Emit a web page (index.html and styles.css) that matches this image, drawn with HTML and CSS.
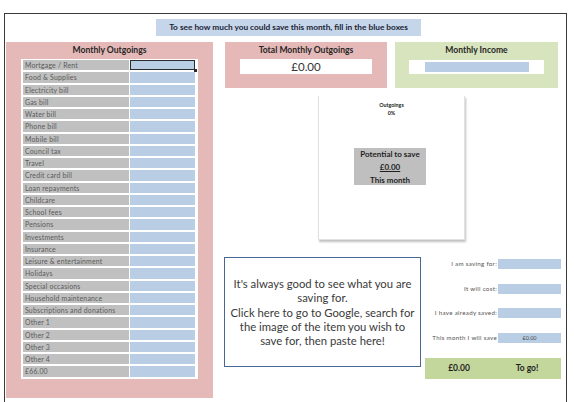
FILE: index.html
```html
<!DOCTYPE html>
<html lang="en">

<head>
    <meta charset="UTF-8">
    <title>Savings Planner</title>
    <link rel="stylesheet" href="styles.css">
</head>

<body>
    <div class="sheet">
        <div class="banner">To see how much you could save this month, fill in the blue boxes</div>

        <div class="layout">
            <section class="outgoings">
                <h2 class="panel-title">Monthly Outgoings</h2>
                <div class="bills">
                    <div class="bill"><span class="bill-name">Mortgage / Rent</span><span class="bill-input selected"></span></div>
                    <div class="bill"><span class="bill-name">Food &amp; Supplies</span><span class="bill-input"></span></div>
                    <div class="bill"><span class="bill-name">Electricity bill</span><span class="bill-input"></span></div>
                    <div class="bill"><span class="bill-name">Gas bill</span><span class="bill-input"></span></div>
                    <div class="bill"><span class="bill-name">Water bill</span><span class="bill-input"></span></div>
                    <div class="bill"><span class="bill-name">Phone bill</span><span class="bill-input"></span></div>
                    <div class="bill"><span class="bill-name">Mobile bill</span><span class="bill-input"></span></div>
                    <div class="bill"><span class="bill-name">Council tax</span><span class="bill-input"></span></div>
                    <div class="bill"><span class="bill-name">Travel</span><span class="bill-input"></span></div>
                    <div class="bill"><span class="bill-name">Credit card bill</span><span class="bill-input"></span></div>
                    <div class="bill"><span class="bill-name">Loan repayments</span><span class="bill-input"></span></div>
                    <div class="bill"><span class="bill-name">Childcare</span><span class="bill-input"></span></div>
                    <div class="bill"><span class="bill-name">School fees</span><span class="bill-input"></span></div>
                    <div class="bill"><span class="bill-name">Pensions</span><span class="bill-input"></span></div>
                    <div class="bill"><span class="bill-name">Investments</span><span class="bill-input"></span></div>
                    <div class="bill"><span class="bill-name">Insurance</span><span class="bill-input"></span></div>
                    <div class="bill"><span class="bill-name">Leisure &amp; entertainment</span><span class="bill-input"></span></div>
                    <div class="bill"><span class="bill-name">Holidays</span><span class="bill-input"></span></div>
                    <div class="bill"><span class="bill-name">Special occasions</span><span class="bill-input"></span></div>
                    <div class="bill"><span class="bill-name">Household maintenance</span><span class="bill-input"></span></div>
                    <div class="bill"><span class="bill-name">Subscriptions and donations</span><span class="bill-input"></span></div>
                    <div class="bill"><span class="bill-name">Other 1</span><span class="bill-input"></span></div>
                    <div class="bill"><span class="bill-name">Other 2</span><span class="bill-input"></span></div>
                    <div class="bill"><span class="bill-name">Other 3</span><span class="bill-input"></span></div>
                    <div class="bill"><span class="bill-name">Other 4</span><span class="bill-input"></span></div>
                    <div class="bill"><span class="bill-name">£66.00</span><span class="bill-input"></span></div>
                </div>
            </section>

            <div class="right">
                <div class="totals">
                    <div class="total-box pink">
                        <h2 class="panel-title">Total Monthly Outgoings</h2>
                        <div class="total-field">£0.00</div>
                    </div>
                    <div class="total-box green">
                        <h2 class="panel-title">Monthly Income</h2>
                        <div class="total-field"><span class="income-input"></span></div>
                    </div>
                </div>

                <div class="chart">
                    <div class="chart-title">Outgoings<br>0%</div>
                    <div class="potential">
                        Potential to save<br>
                        <u>£0.00</u><br>
                        This month
                    </div>
                </div>

                <div class="goal">
                    <div class="note">
                        It's always good to see what you are saving for.<br>
                        Click here to go to Google, search for the image of the item you wish to save for, then paste here!
                    </div>
                    <div class="savings">
                        <div class="saving-row"><span class="saving-label">I am saving for:</span><span class="saving-input"></span></div>
                        <div class="saving-row"><span class="saving-label">It will cost:</span><span class="saving-input"></span></div>
                        <div class="saving-row"><span class="saving-label">I have already saved:</span><span class="saving-input"></span></div>
                        <div class="saving-row"><span class="saving-label">This month I will save</span><span class="saving-input">£0.00</span></div>
                        <div class="to-go"><span>£0.00</span><span>To go!</span></div>
                    </div>
                </div>
            </div>
        </div>
    </div>
</body>

</html>
```

FILE: styles.css
```css
body {
    margin: 0;
    font-family: Lato, "Open Sans", sans-serif;
    color: #262626;
    background: #fff;
}

.sheet {
    margin: 13px 0 0 4px;
    width: 561px;
    height: 388px;
    border: 1px solid #3a3a3a;
    border-bottom: none;
}

.banner {
    margin: 5px 0 0 151px;
    width: 265px;
    height: 17px;
    line-height: 17px;
    background-color: #c5d5ea;
    font-size: 8.3px;
    font-weight: bold;
    text-align: center;
    color: #1c2433;
}

.layout {
    display: grid;
    grid-template-columns: 207px 336px;
    column-gap: 12px;
    margin-top: 6px;
    padding-left: 1px;
}

.panel-title {
    margin: 0;
    height: 17px;
    line-height: 17px;
    font-size: 8.6px;
    font-weight: bold;
    text-align: center;
    color: #262626;
}

/* left panel */
.outgoings {
    height: 356px;
    padding: 0 15px;
    background-color: #e5b9b8;
}

.bills {
    display: grid;
    row-gap: 2px;
    padding: 1px 3px 2px 2px;
    background-color: #fff;
}

.bill {
    display: grid;
    grid-template-columns: 106px 1fr;
    column-gap: 1px;
    height: 10.25px;
}

.bill-name {
    background-color: #c0c0c0;
    padding-left: 2px;
    font-size: 6.9px;
    letter-spacing: 0.2px;
    line-height: 10.25px;
    color: #5a5a5a;
    white-space: nowrap;
    overflow: hidden;
}

.bill-input {
    background-color: #b9cde5;
}

.selected {
    position: relative;
    outline: 1.5px solid #2b2b2b;
    outline-offset: -1px;
}

.selected::after {
    content: "";
    position: absolute;
    right: -2px;
    bottom: -2px;
    width: 3px;
    height: 3px;
    background: #2b2b2b;
}

/* totals */
.totals {
    display: grid;
    grid-template-columns: 162px 163px;
    column-gap: 8px;
}

.total-box {
    height: 46px;
}

.pink {
    background-color: #e5b9b8;
    padding: 0 15px;
}

.green {
    background-color: #d8e4bd;
    padding: 0 14px;
}

.total-field {
    display: flex;
    align-items: center;
    justify-content: center;
    height: 15px;
    background: #fff;
    font-size: 11.5px;
    color: #333;
}

.green .total-field {
    height: 14px;
    margin-top: 1px;
}

.income-input {
    width: 104px;
    height: 10px;
    background-color: #b9cde5;
}

/* chart */
.chart {
    margin: 8px 0 0 93px;
    width: 145px;
    height: 143px;
    border: 1px solid #e2e2e2;
    border-top: none;
    background: #fff;
    box-shadow: 1px 2px 2px rgba(0, 0, 0, 0.25);
}

.chart-title {
    padding-top: 5px;
    font-size: 5.3px;
    font-weight: bold;
    line-height: 8px;
    text-align: center;
    color: #222;
}

.potential {
    margin: 31px 0 0 35px;
    width: 72px;
    height: 37px;
    background-color: #bfbfbf;
    font-size: 8px;
    font-weight: bold;
    line-height: 13px;
    text-align: center;
    color: #1f1f1f;
}

/* goal */
.goal {
    display: flex;
    margin-top: 17px;
}

.note {
    box-sizing: border-box;
    width: 197px;
    height: 110px;
    margin-left: -1px;
    padding: 19px 4px 0;
    border: 1.5px solid #4a6694;
    font-size: 11.3px;
    line-height: 14.3px;
    text-align: center;
    color: #3a3a3a;
}

.savings {
    margin-left: 4px;
    width: 136px;
    padding-top: 2px;
}

.saving-row {
    display: flex;
    justify-content: flex-end;
    height: 10px;
    margin-bottom: 14.5px;
}

.saving-label {
    padding-right: 1px;
    font-size: 6.2px;
    letter-spacing: 0.3px;
    line-height: 10px;
    color: #555;
    white-space: nowrap;
}

.saving-input {
    flex: none;
    width: 63px;
    background-color: #b9cde5;
    font-size: 5.5px;
    line-height: 10px;
    text-align: center;
    color: #4d4d4d;
}

.to-go {
    display: grid;
    grid-template-columns: 1fr 1fr;
    height: 21px;
    margin-top: 15px;
    background-color: #c3d69b;
    font-size: 8.5px;
    font-weight: bold;
    line-height: 21px;
    text-align: center;
    color: #1f1f1f;
}
```
